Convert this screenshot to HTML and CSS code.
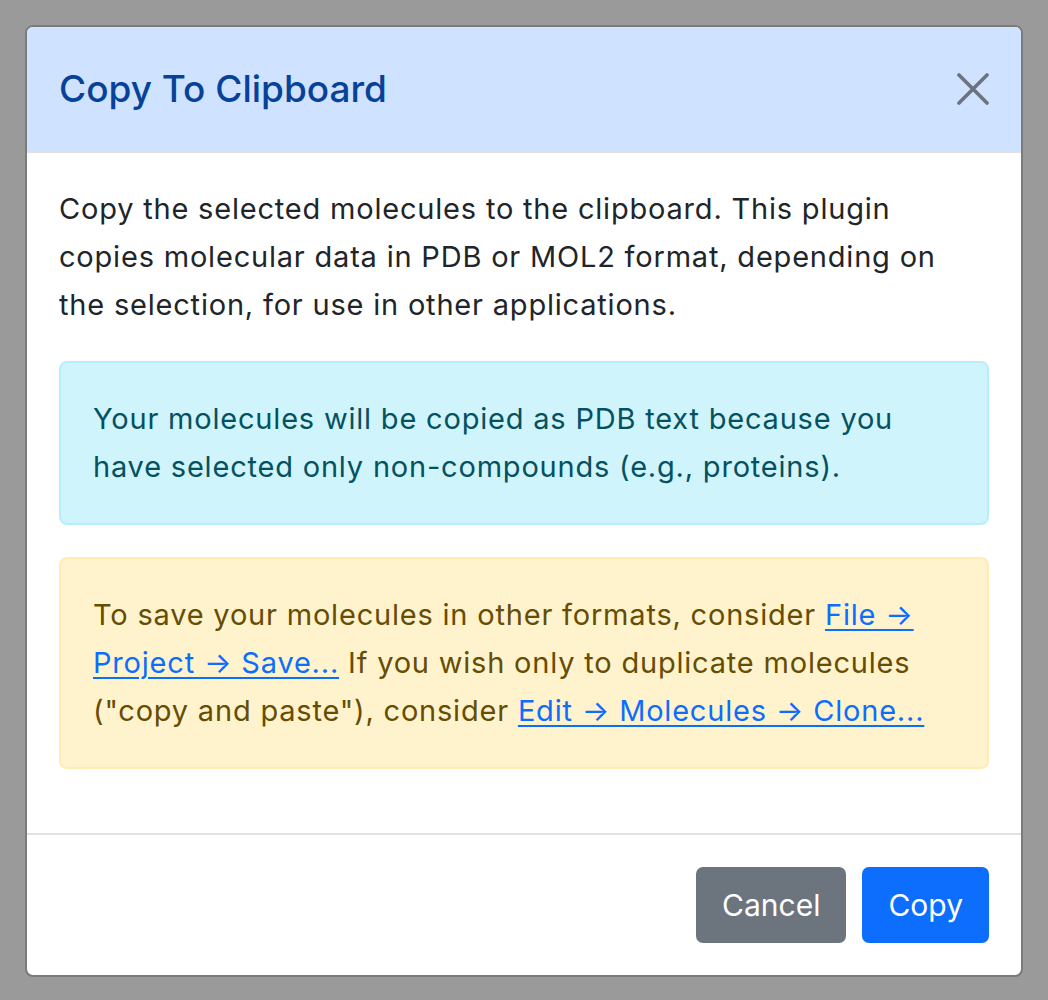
FILE: index.html
```html
<!DOCTYPE html>
<html lang="en">
<head>
    <meta charset="UTF-8">
    <meta name="viewport" content="width=device-width, initial-scale=1.0">
    <title>Copy To Clipboard</title>
    <link rel="stylesheet" href="styles.css">
</head>
<body>
    <div class="modal">
        <div class="modal-header">
            <h5 class="modal-title">Copy To Clipboard</h5>
            <button class="btn-close" aria-label="Close">
                <svg viewBox="0 0 32 32" width="32" height="32">
                    <path d="M2 2 L30 30 M30 2 L2 30" />
                </svg>
            </button>
        </div>
        <div class="modal-body">
            <p class="intro">Copy the selected molecules to the clipboard. This plugin copies molecular data in PDB or MOL2 format, depending on the selection, for use in other applications.</p>
            <div class="alert alert-info">
                Your molecules will be copied as PDB text because you have selected only non-compounds (e.g., proteins).
            </div>
            <div class="alert alert-warning">
                To save your molecules in other formats, consider <a href="#">File &rarr; Project &rarr; Save...</a> If you wish only to duplicate molecules ("copy and paste"), consider <a href="#">Edit &rarr; Molecules &rarr; Clone...</a>
            </div>
        </div>
        <div class="modal-footer">
            <button class="btn btn-secondary">Cancel</button>
            <button class="btn btn-primary">Copy</button>
        </div>
    </div>
</body>
</html>
```

FILE: styles.css
```css
body {
    margin: 0;
    padding: 25px;
    background: #9a9a9a;
    font-family: 'Inter', 'Noto Sans', sans-serif;
    color: #212529;
}

.modal {
    background: #fff;
    border: 2px solid #7b7b7b;
    border-radius: 8px;
    overflow: hidden;
}

.modal-header {
    display: flex;
    align-items: center;
    justify-content: space-between;
    padding: 32px;
    background: #cfe2ff;
    border-bottom: 2px solid #dee2e6;
}

.modal-title {
    margin: 0;
    font-size: 37px;
    font-weight: 500;
    line-height: 60px;
    color: #084298;
}

.btn-close {
    background: none;
    border: none;
    padding: 0;
    width: 32px;
    height: 32px;
    cursor: pointer;
}

.btn-close svg {
    display: block;
}

.btn-close path {
    stroke: #6b7280;
    stroke-width: 3.6;
    stroke-linecap: round;
    fill: none;
}

.modal-body {
    padding: 32px;
    font-size: 29px;
    letter-spacing: 0.8px;
    line-height: 48px;
}

.intro {
    margin: 0 0 32px;
}

.alert {
    padding: 32px;
    margin-bottom: 32px;
    border: 2px solid transparent;
    border-radius: 8px;
}

.alert-info {
    background: #cff4fc;
    border-color: #b6effb;
    color: #055160;
}

.alert-warning {
    background: #fff3cd;
    border-color: #ffecb5;
    color: #664d03;
}

.alert a {
    color: #0d6efd;
    text-decoration: underline;
    text-underline-offset: 4px;
    text-decoration-thickness: 2px;
}

.modal-footer {
    display: flex;
    justify-content: flex-end;
    gap: 16px;
    padding: 32px;
    border-top: 2px solid #dee2e6;
}

.btn {
    font-family: inherit;
    font-size: 30px;
    line-height: 48px;
    padding: 12px 24px;
    border: 2px solid transparent;
    border-radius: 7px;
    color: #fff;
    cursor: pointer;
}

.btn-secondary {
    background: #6c757d;
    border-color: #6c757d;
}

.btn-primary {
    background: #0d6efd;
    border-color: #0d6efd;
}
```
